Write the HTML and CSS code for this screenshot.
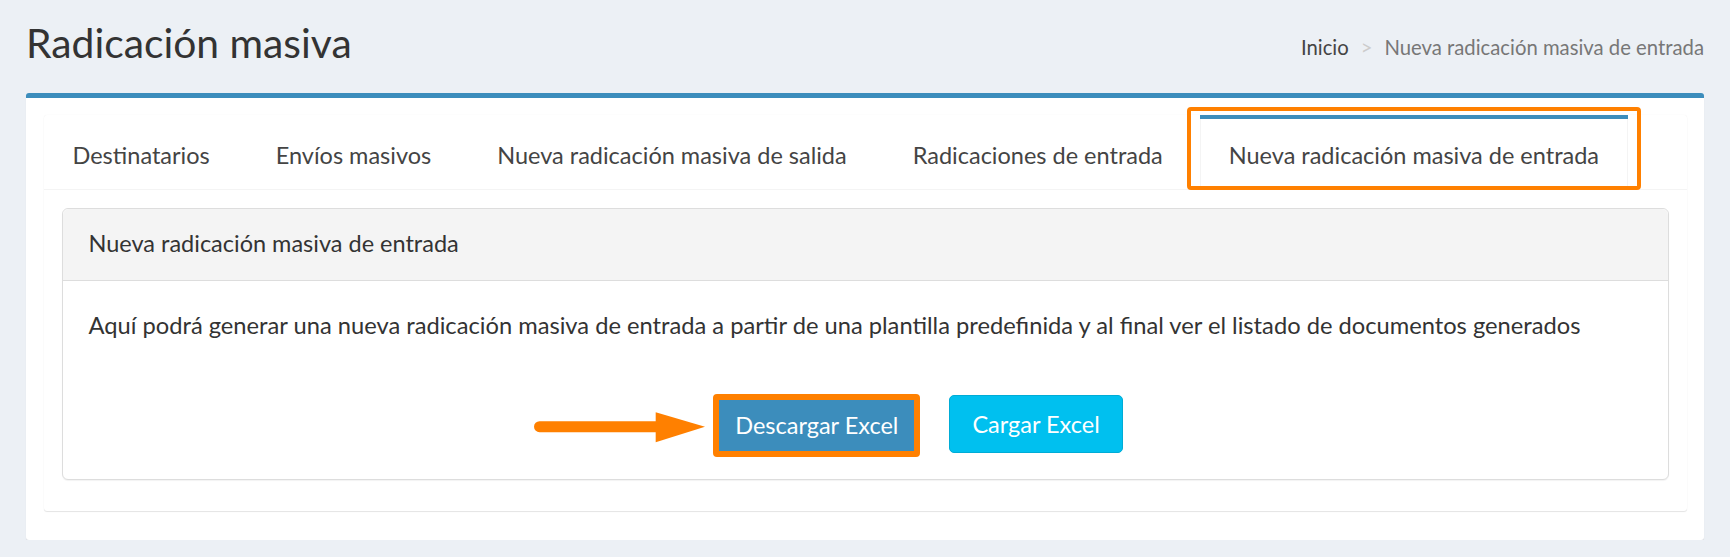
FILE: index.html
```html
<!DOCTYPE html>
<html lang="es">
<head>
    <meta charset="UTF-8">
    <title>Radicación masiva</title>
    <link rel="stylesheet" href="styles.css">
</head>
<body>
<section class="content-header">
    <h1>Radicación masiva</h1>
    <ol class="breadcrumb">
        <li><a href="#">Inicio</a></li>
        <li class="sep">&gt;</li>
        <li class="active">Nueva radicación masiva de entrada</li>
    </ol>
</section>

<section class="content">
    <div class="box">
        <div class="nav-tabs-custom">
            <ul class="nav-tabs">
                <li><a href="#">Destinatarios</a></li>
                <li><a href="#">Envíos masivos</a></li>
                <li><a href="#">Nueva radicación masiva de salida</a></li>
                <li><a href="#">Radicaciones de entrada</a></li>
                <li class="active marked"><a href="#">Nueva radicación masiva de entrada</a></li>
            </ul>
            <div class="tab-content">
                <div class="panel">
                    <div class="panel-heading">Nueva radicación masiva de entrada</div>
                    <div class="panel-body">
                        <p>Aquí podrá generar una nueva radicación masiva de entrada a partir de una plantilla predefinida y al final ver el listado de documentos generados</p>
                        <div class="actions">
                            <span class="pointed">
                                <svg class="arrow" width="172" height="31" viewBox="0 0 172 31">
                                    <line x1="5.5" y1="14.7" x2="126" y2="14.7" stroke="#ff8000" stroke-width="11" stroke-linecap="round"/>
                                    <polygon points="121.7,0.3 171,14.7 121.7,30.3" fill="#ff8000"/>
                                </svg>
                                <button class="btn btn-primary marked-btn">Descargar Excel</button>
                            </span>
                            <button class="btn btn-info">Cargar Excel</button>
                        </div>
                    </div>
                </div>
            </div>
        </div>
    </div>
</section>
</body>
</html>
```
FILE: styles.css
```css
body {
    margin: 0;
    background: #ecf0f5;
    font-family: Lato, "Liberation Sans", sans-serif;
    font-size: 23.5px;
    line-height: 1.42857;
    color: #333;
}
a {
    color: inherit;
    text-decoration: none;
}

/* encabezado */
.content-header {
    display: flex;
    justify-content: space-between;
    align-items: flex-start;
    padding: 19px 26px 0 26px;
}
.content-header h1 {
    margin: 0;
    font-size: 40.8px;
    font-weight: 400;
    line-height: 1.2;
    color: #333;
}
.breadcrumb {
    display: flex;
    margin: 16px 0 0 0;
    padding: 0;
    list-style: none;
    font-size: 20.3px;
    line-height: 1.2;
    color: #444;
}
.breadcrumb .sep {
    color: #ccc;
    margin: 0 12px;
}
.breadcrumb .active {
    color: #777;
}

/* caja principal */
.content {
    padding: 25px 26px 0 26px;
}
.box {
    background: #fff;
    border-top: 5px solid #3c8dbc;
    border-radius: 3px;
    box-shadow: 0 1px 1px rgba(0, 0, 0, 0.1);
    padding: 17.5px 17.5px 29px 17.5px;
}
.nav-tabs-custom {
    background: #fff;
    border-radius: 3px;
    box-shadow: 0 1px 1px rgba(0, 0, 0, 0.1), 0 0 1px rgba(0, 0, 0, 0.08);
}
.nav-tabs {
    display: flex;
    margin: 0;
    padding: 0;
    list-style: none;
    border-bottom: 1px solid #f4f4f4;
}
.nav-tabs li {
    border-top: 4px solid transparent;
    margin-right: 8px;
    margin-bottom: -1px;
}
.nav-tabs li a {
    display: block;
    padding: 20px 28px 16px 28px;
    border: 1px solid transparent;
    border-top: 0;
    color: #444;
}
.nav-tabs li.active {
    border-top-color: #3c8dbc;
}
.nav-tabs li.active a {
    background: #fff;
    border-left-color: #f4f4f4;
    border-right-color: #f4f4f4;
}
.marked {
    position: relative;
}
.marked::after {
    content: "";
    position: absolute;
    top: -12px;
    left: -13px;
    right: -13px;
    bottom: 0;
    border: 4px solid #ff8000;
    border-radius: 4px;
}

.tab-content {
    padding: 18px 18px 31px 18px;
}
.panel {
    border: 1px solid #ddd;
    border-radius: 6px;
    background: #fff;
    box-shadow: 0 1px 1px rgba(0, 0, 0, 0.05);
}
.panel-heading {
    background: #f4f4f4;
    border-bottom: 1px solid #ddd;
    border-radius: 6px 6px 0 0;
    padding: 18px 26px 19px 26px;
}
.panel-body {
    padding: 28px 26px 22px 26px;
}
.panel-body p {
    margin: 0;
    font-size: 23.7px;
}

/* botones */
.actions {
    display: flex;
    justify-content: center;
    align-items: flex-start;
    gap: 29px;
    margin-top: 52px;
    padding-left: 106px;
}
.pointed {
    position: relative;
    display: block;
}
.arrow {
    position: absolute;
    top: 18px;
    right: calc(100% + 7px);
}
.btn {
    font-family: inherit;
    font-size: 23.5px;
    line-height: 1.42857;
    color: #fff;
    border: 1px solid transparent;
    border-radius: 5px;
    height: 58px;
    padding: 0 22px;
    cursor: pointer;
}
.btn-primary {
    background: #3c8dbc;
    border-color: #367fa9;
}
.btn-info {
    background: #00c0ef;
    border-color: #00acd6;
    margin-top: 1px;
}
.marked-btn {
    height: 63px;
    border: 6px solid #ff8000;
    border-radius: 4px;
    padding: 0 16px;
}
```
